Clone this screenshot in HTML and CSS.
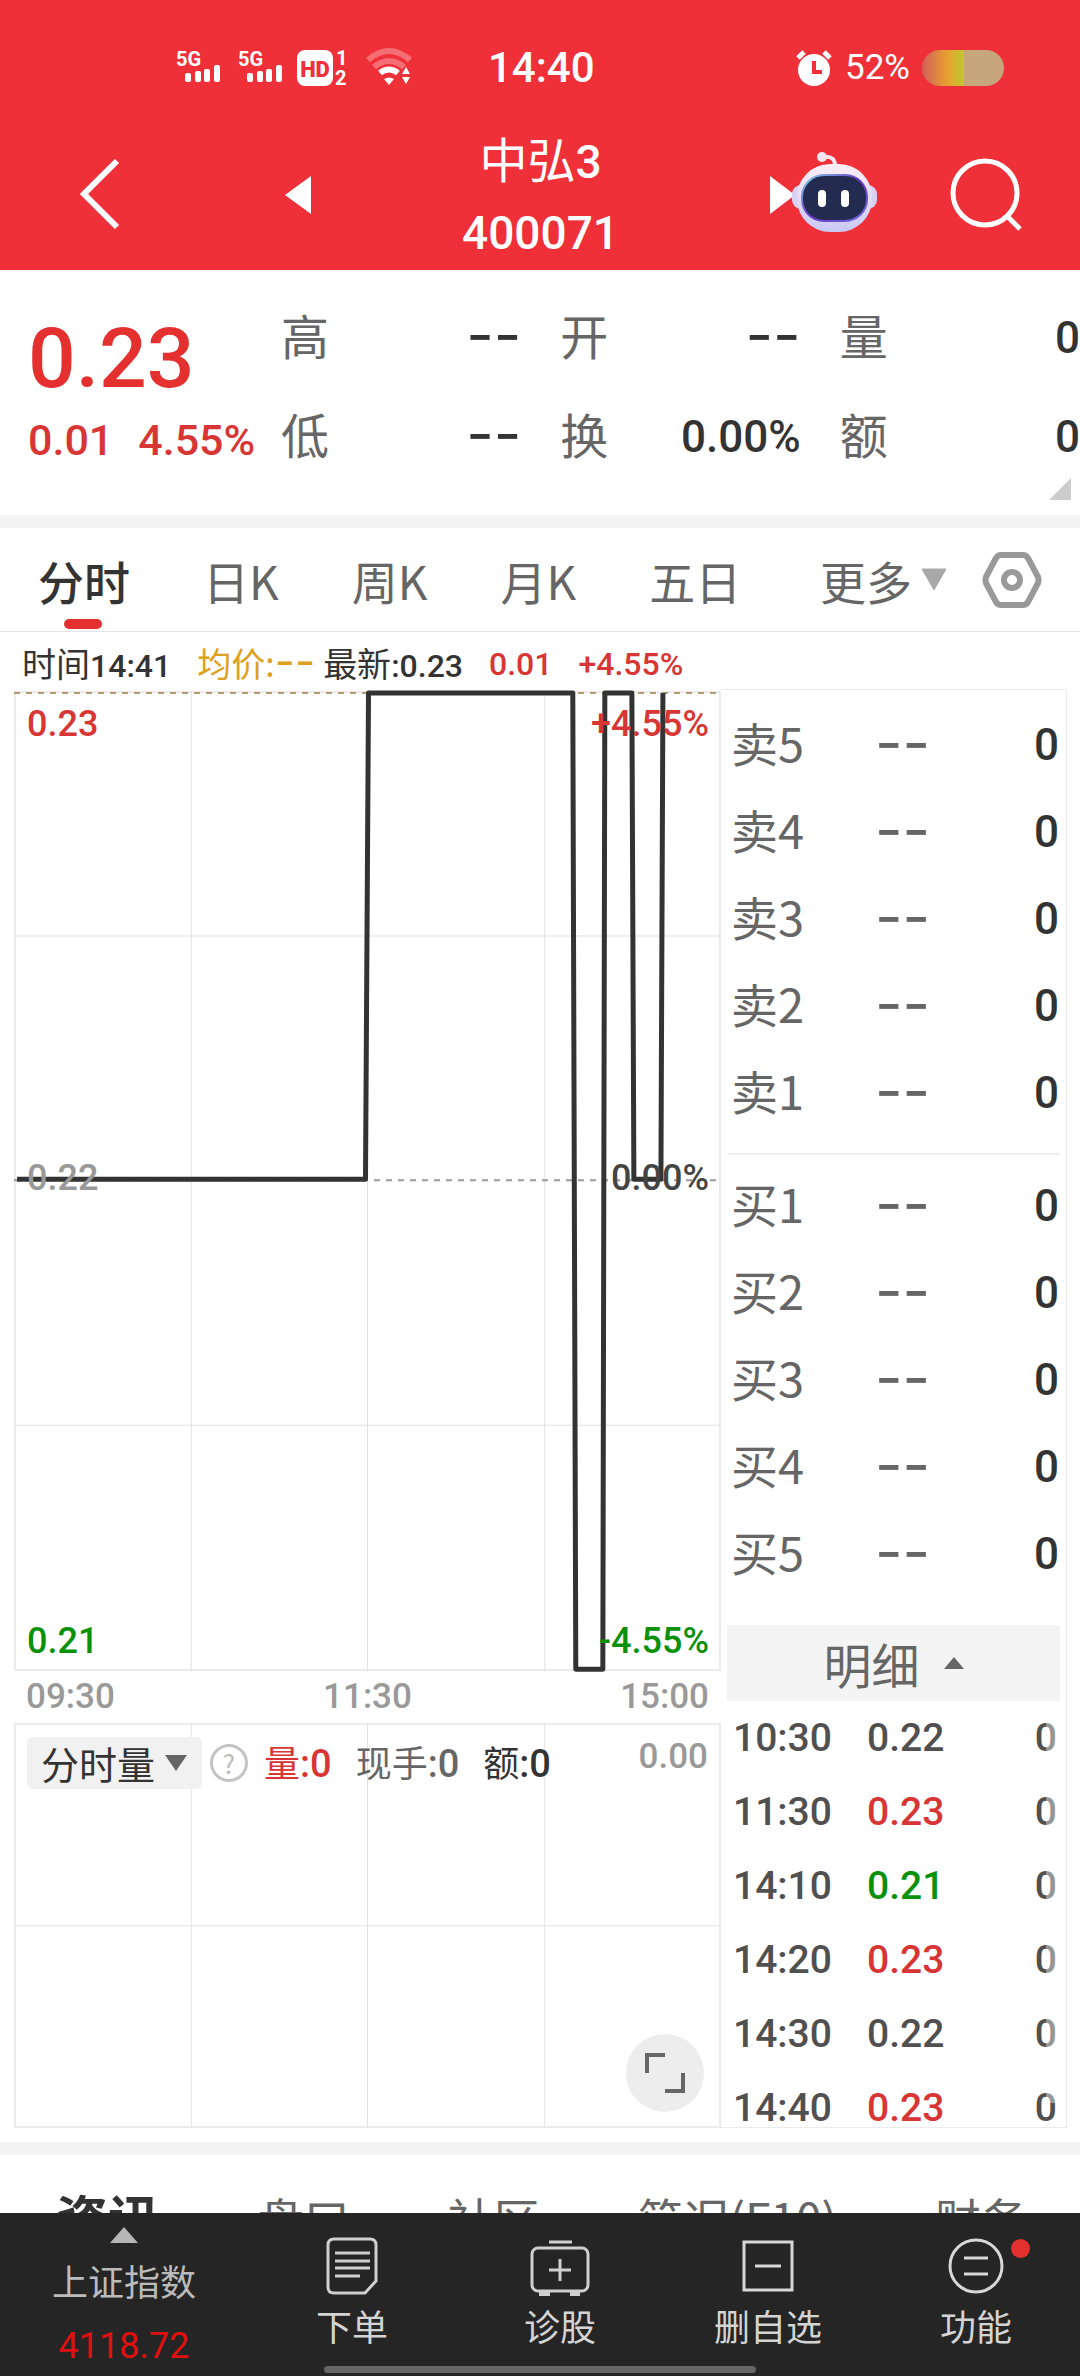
FILE: index.html
```html
<!DOCTYPE html>
<html lang="zh-CN">
<head>
<meta charset="utf-8">
<meta name="viewport" content="width=device-width, initial-scale=1">
<title>中弘3 400071</title>
<link rel="stylesheet" href="styles.css">
</head>
<body>
<header class="top">
  <div class="status">
    <div class="status-left">
      <svg width="172" height="38" viewBox="0 0 172 38" fill="#fff">
        <g id="sig"><text class="sig-text" x="0" y="17">5G</text>
        <rect x="9" y="24" width="6" height="9" rx="2"/><rect x="19" y="22" width="6" height="11" rx="2"/><rect x="28" y="20" width="6" height="13" rx="2"/><rect x="38" y="16" width="6" height="17" rx="2"/></g>
        <use href="#sig" x="62"/>
        <rect x="121" y="1" width="36" height="36" rx="8"/>
        <text class="hd-text" x="139" y="28" text-anchor="middle">HD</text>
        <text class="sig-text" x="160" y="16">1</text><text class="sig-text" x="159" y="36">2</text>
      </svg>
      <svg width="46" height="38" viewBox="0 0 46 38" fill="none">
        <path d="M2 11Q23-7 44 11" stroke="#fff" stroke-opacity=".3" stroke-width="6"/>
        <path d="M8 18Q23 6 38 18" stroke="#fff" stroke-opacity=".3" stroke-width="6"/>
        <path d="M14 24Q23 17 32 24" stroke="#fff" stroke-width="6"/>
        <path d="M18 30Q23 27 28 30L23 36Z" fill="#fff"/>
        <path d="M36 25l4-7 4 7zM36 28h8l-4 7z" fill="#fff"/>
      </svg>
    </div>
    <time class="clock">14:40</time>
    <div class="status-right">
      <svg width="38" height="38" viewBox="0 0 38 38">
        <circle cx="19" cy="21" r="16" fill="#fff"/>
        <path d="M3 9L9 3M29 3L35 9" stroke="#fff" stroke-width="5"/>
        <path d="M19 12V23H27" fill="none" stroke="#f03038" stroke-width="4"/>
      </svg>
      <span class="percent">52%</span>
      <span class="battery"></span>
    </div>
  </div>
  <div class="titlebar">
    <button class="icon-btn" aria-label="返回"><svg width="42" height="72" viewBox="0 0 42 72"><path d="M38 1L5 34L38 67" fill="none" stroke="#fff" stroke-width="6"/></svg></button>
    <button class="icon-btn" aria-label="上一只"><svg width="26" height="40" viewBox="0 0 26 40"><path d="M26 0V38L0 19Z" fill="#fff"/></svg></button>
    <h1 class="stock"><span class="stock-name">中弘<span class="num">3</span></span><span class="num">400071</span></h1>
    <button class="icon-btn" aria-label="下一只"><svg width="108" height="84" viewBox="0 0 108 84">
      <defs>
        <linearGradient id="shell" x1="0" y1="0" x2="0" y2="1"><stop offset="0" stop-color="#fbeef5"/><stop offset=".5" stop-color="#e2dcf5"/><stop offset="1" stop-color="#c9c8f2"/></linearGradient>
        <linearGradient id="rim" x1="0" y1="0" x2="1" y2="1"><stop offset="0" stop-color="#7fd3ea"/><stop offset=".5" stop-color="#6a35c0"/><stop offset="1" stop-color="#6a6ae0"/></linearGradient>
      </defs>
      <path d="M0 22V60L25 41Z" fill="#fff"/>
      <path d="M53 3Q66 1 65 14" fill="none" stroke="#f6e6f2" stroke-width="4"/>
      <circle cx="52" cy="3" r="5" fill="#f6e6f2"/>
      <rect x="22" y="31" width="85" height="24" rx="9" fill="#d9d2f3"/>
      <rect x="27" y="10" width="75" height="68" rx="33" fill="url(#shell)"/>
      <rect x="32" y="21" width="65" height="46" rx="22" fill="#242b50" stroke="url(#rim)" stroke-width="2"/>
      <rect x="48" y="36" width="8" height="17" rx="4" fill="#fff"/><rect x="71" y="36" width="8" height="17" rx="4" fill="#fff"/>
    </svg></button>
    <button class="icon-btn" aria-label="搜索"><svg width="74" height="74" viewBox="0 0 74 74" fill="none" stroke="#fff" stroke-width="5"><circle cx="37" cy="34" r="32"/><path d="M59 57L72 70"/></svg></button>
  </div>
</header>

<main>
  <section class="quote">
    <div class="quote-price">
      <strong class="num last">0.23</strong>
      <div class="num change"><span>0.01</span><span>4.55%</span></div>
    </div>
    <dl class="quote-grid">
      <div><dt>高</dt><dd class="dash">--</dd></div>
      <div><dt>开</dt><dd class="dash">--</dd></div>
      <div><dt>量</dt><dd class="num">0</dd></div>
      <div><dt>低</dt><dd class="dash">--</dd></div>
      <div><dt>换</dt><dd class="num">0.00%</dd></div>
      <div><dt>额</dt><dd class="num">0</dd></div>
    </dl>
    <span class="corner"></span>
  </section>

  <nav class="periods">
    <button class="active">分时</button>
    <button>日K</button>
    <button>周K</button>
    <button>月K</button>
    <button>五日</button>
    <button class="more">更多<svg width="28" height="24" viewBox="0 0 28 24"><path d="M2 1H26L14 22Z" fill="#a8a8a8" stroke="#a8a8a8" stroke-linejoin="round"/></svg></button>
    <button class="settings" aria-label="设置"><svg width="60" height="58" viewBox="0 0 60 58" fill="none" stroke="#999" stroke-width="6" stroke-linejoin="round"><path d="M19 4H41Q44 4 46 7L56 26Q57 29 56 32L46 51Q44 54 41 54H19Q16 54 14 51L4 32Q3 29 4 26L14 7Q16 4 19 4Z"/><circle cx="30" cy="29" r="8"/></svg></button>
  </nav>

  <div class="legend">
    <span>时间<b class="num">14:41</b></span>
    <span class="avg">均价:<b class="dash">--</b></span>
    <span class="newest">最新<b class="num">:0.23</b></span>
    <span class="num up">0.01</span>
    <span class="num up">+4.55%</span>
  </div>

  <section class="board">
    <div class="charts">
      <div class="chart price-chart">
        <svg class="plot" viewBox="0 0 706 980" preserveAspectRatio="none">
          <g class="grid"><path d="M177 0V980M353 0V980M530 0V980M0 245H706M0 734H706"/></g>
          <path class="limit" d="M0 2H706"/>
          <path class="zero" d="M0 489H706"/>
          <path class="line" d="M3 488H351L354 2H558L561 978H588L590 2H617L619 488H646L648 2"/>
        </svg>
        <span class="num tag tl up">0.23</span><span class="num tag tr up">+4.55%</span>
        <span class="num tag ml">0.22</span><span class="num tag mr">0.00%</span>
        <span class="num tag bl down">0.21</span><span class="num tag br down">-4.55%</span>
      </div>
      <div class="num times"><span>09:30</span><span>11:30</span><span>15:00</span></div>
      <div class="chart volume-chart">
        <svg class="plot" viewBox="0 0 706 403" preserveAspectRatio="none">
          <g class="grid"><path d="M177 0V403M353 0V403M530 0V403M0 202H706"/></g>
        </svg>
        <div class="volume-head">
          <button class="indicator">分时量<svg width="22" height="16" viewBox="0 0 22 16"><path d="M0 0H22L11 16Z" fill="#666"/></svg></button>
          <button class="help" aria-label="说明">?</button>
          <span class="up">量<b class="num">:0</b></span>
          <span class="soft">现手<b class="num">:0</b></span>
          <span>额<b class="num">:0</b></span>
          <span class="num max">0.00</span>
        </div>
        <button class="expand" aria-label="全屏"><svg width="42" height="42" viewBox="0 0 42 42" fill="none" stroke="#666" stroke-width="4"><path d="M3 21V3H21M39 21V39H21"/></svg></button>
      </div>
    </div>

    <aside class="depth">
      <table class="orders">
        <tbody>
          <tr><th>卖5</th><td class="dash">--</td><td class="num">0</td></tr>
          <tr><th>卖4</th><td class="dash">--</td><td class="num">0</td></tr>
          <tr><th>卖3</th><td class="dash">--</td><td class="num">0</td></tr>
          <tr><th>卖2</th><td class="dash">--</td><td class="num">0</td></tr>
          <tr><th>卖1</th><td class="dash">--</td><td class="num">0</td></tr>
        </tbody>
      </table>
      <table class="orders buys">
        <tbody>
          <tr><th>买1</th><td class="dash">--</td><td class="num">0</td></tr>
          <tr><th>买2</th><td class="dash">--</td><td class="num">0</td></tr>
          <tr><th>买3</th><td class="dash">--</td><td class="num">0</td></tr>
          <tr><th>买4</th><td class="dash">--</td><td class="num">0</td></tr>
          <tr><th>买5</th><td class="dash">--</td><td class="num">0</td></tr>
        </tbody>
      </table>
      <button class="detail">明细<svg width="20" height="14" viewBox="0 0 20 14"><path d="M0 13L10 1L20 13Z" fill="#666"/></svg></button>
      <div class="trades">
        <table class="num">
          <tbody>
            <tr><td>10:30</td><td>0.22</td><td>0</td></tr>
            <tr><td>11:30</td><td class="up">0.23</td><td>0</td></tr>
            <tr><td>14:10</td><td class="down">0.21</td><td>0</td></tr>
            <tr><td>14:20</td><td class="up">0.23</td><td>0</td></tr>
            <tr><td>14:30</td><td>0.22</td><td>0</td></tr>
            <tr><td>14:40</td><td class="up">0.23</td><td>0</td></tr>
          </tbody>
        </table>
      </div>
    </aside>
  </section>

  <nav class="sections">
    <button class="active">资讯</button>
    <button>盘口</button>
    <button>社区</button>
    <button>简况(F10)</button>
    <button>财务</button>
  </nav>
</main>

<footer class="dock">
  <button class="index">
    <svg width="28" height="16" viewBox="0 0 28 16"><path d="M0 16L14 0L28 16Z" fill="#b5b5b5"/></svg>
    <span>上证指数</span>
    <span class="index-value">4118.72</span>
  </button>
  <button>
    <svg width="60" height="60" viewBox="0 0 60 60" fill="none" stroke="#d0d0d0" stroke-width="3"><path d="M12 3H48Q54 3 54 9V45L43 57H12Q6 57 6 51V9Q6 3 12 3Z"/><path d="M13 17H48M13 25H48M13 32H48M13 40H38"/></svg>
    <span>下单</span>
  </button>
  <button>
    <svg width="60" height="60" viewBox="0 0 60 60" fill="none" stroke="#d0d0d0" stroke-width="3"><rect x="2" y="12" width="56" height="43" rx="6"/><path d="M19 6H42M30 23V45M19 34H41"/><path d="M9 58H20M40 58H50" stroke-width="4"/></svg>
    <span>诊股</span>
  </button>
  <button>
    <svg width="60" height="60" viewBox="0 0 60 60" fill="none" stroke="#d8d8d8" stroke-width="3"><rect x="6" y="6" width="48" height="48"/><path d="M17 30H43"/></svg>
    <span>删自选</span>
  </button>
  <button>
    <svg width="60" height="60" viewBox="0 0 60 60" fill="none" stroke="#d8d8d8" stroke-width="3"><circle cx="30" cy="30" r="26"/><path d="M18 22H42M18 38H42"/></svg>
    <span>功能</span>
    <i class="dot"></i>
  </button>
  <span class="home"></span>
</footer>
</body>
</html>
```
FILE: styles.css
```css
* { box-sizing: border-box; margin: 0; padding: 0; }

:root {
  --red: #d83535;
  --green: #0a910a;
  --ink: #333;
  --soft: #666;
  --faint: #999;
  --rule: #ebebeb;
  --band: #f4f4f4;
  --cjk: "Noto Sans CJK SC", sans-serif;
  --digits: Roboto, sans-serif;
}

body {
  font-family: var(--cjk);
  color: var(--ink);
  background: #fff;
  overflow-x: hidden;
}

button { border: 0; background: none; font: inherit; color: inherit; white-space: nowrap; cursor: pointer; }
svg { display: block; overflow: visible; }
b, strong, th { font-weight: 400; }

.num { font-family: var(--digits); font-weight: 500; }
.dash { font-family: Inter, sans-serif; }
.up { color: var(--red); }
.down { color: var(--green); }
.soft { color: var(--soft); }

/* Status bar and title */
.top { background: #f03038; color: #fff; }
.status {
  height: 122px;
  padding: 14px 76px 0 176px;
  display: grid;
  grid-template-columns: 312px 1fr auto;
  align-items: center;
}
.status-left { display: flex; gap: 18px; }
.status-right { display: flex; align-items: center; justify-content: flex-end; gap: 12px; }
.sig-text { font: 700 20px Roboto, sans-serif; }
.hd-text { font: 900 22px Roboto, sans-serif; fill: #f03038; }
.clock { font: 500 42px/48px Roboto, sans-serif; }
.percent { font: 400 35px/40px Roboto, sans-serif; }
.battery {
  width: 82px; height: 36px; border-radius: 18px;
  background: linear-gradient(90deg, #d0605a, #e8a030 60%, #c0c830) 0 0 / 42px 100% no-repeat #c8a67c;
}
.titlebar {
  height: 148px;
  padding: 0 58px 8px 79px;
  display: grid;
  grid-template-columns: 206px 26px 1fr 108px 144px;
  align-items: center;
}
.icon-btn:last-child { justify-self: end; }
.stock { text-align: center; font-weight: 400; font-size: 46px; }
.stock span { display: block; line-height: 71px; }
.stock .stock-name { font-size: 48px; }
.stock-name .num { display: inline; font-size: 46px; }

/* Quote summary */
.quote {
  position: relative;
  display: grid;
  grid-template-columns: 253px 1fr;
  padding: 15px 0 32px 28px;
  border-bottom: 13px solid var(--band);
}
.quote-price { padding-top: 18px; color: #e53030; }
.last { display: block; font-size: 84px; line-height: 112px; }
.change { display: flex; gap: 25px; font-size: 43px; line-height: 50px; color: var(--red); }
.quote-grid { display: grid; grid-template-columns: repeat(3, 1fr); column-gap: 39px; }
.quote-grid div { display: flex; justify-content: space-between; font-size: 48px; line-height: 99px; }
.quote-grid dt { color: var(--soft); }
.quote-grid .dash { font-size: 60px; }
.quote-grid .num { padding-top: 8px; font-size: 44px; line-height: 91px; }
.corner {
  position: absolute; right: 9px; bottom: 15px;
  border: 11px solid transparent; border-right-color: #ccc; border-bottom-color: #ccc;
}

/* Period tabs */
.periods {
  display: flex;
  align-items: center;
  gap: 73px;
  height: 104px;
  padding: 0 38px;
  border-bottom: 1px solid #e4e4e4;
  font-size: 46px;
  color: var(--soft);
}
.periods .active { position: relative; color: var(--ink); font-weight: 500; }
.periods .active::after {
  content: ""; position: absolute; left: 26px; bottom: -16px;
  width: 38px; height: 10px; border-radius: 5px; background: #e53030;
}
.more { display: flex; align-items: center; gap: 8px; margin-left: auto; }
.settings { margin-left: -39px; }

/* Cursor readout */
.legend { display: flex; height: 57px; padding-left: 22px; font-size: 34px; line-height: 62px; }
.avg { color: #dda020; margin-left: 26px; }
.avg .dash { font-size: 44px; line-height: 34px; }
.newest { margin-left: 8px; }
.legend .num { font-size: 32px; }
.legend .up { margin-left: 26px; line-height: 64px; }

/* Charts and order book */
.board {
  display: grid;
  grid-template-columns: 707fr 346fr;
  margin: 0 13px 0 14px;
  padding-bottom: 14px;
}
.charts { display: flex; flex-direction: column; padding-top: 2px; }
.chart { position: relative; border: 2px solid var(--rule); }
.price-chart { flex: 982; }
.volume-chart { flex: 403; }
.plot { position: absolute; inset: -2px; width: calc(100% + 4px); height: calc(100% + 4px); fill: none; }
.plot path { vector-effect: non-scaling-stroke; }
.grid { stroke: #e2e2e2; stroke-width: 1; }
.limit { stroke: #b39c74; stroke-width: 2; stroke-dasharray: 6 6; }
.zero { stroke: #999; stroke-width: 2; stroke-dasharray: 6 6; }
.line { stroke: #333; stroke-width: 5; stroke-linejoin: round; }
.tag { position: absolute; font-size: 36px; line-height: 38px; }
.tl, .ml, .bl { left: 11px; }
.tr, .mr, .br { right: 10px; }
.tl, .tr { top: 12px; }
.ml, .mr { top: calc(50% - 22px); }
.bl, .br { bottom: 9px; }
.ml { color: var(--faint); }
.mr { color: #444; }
.times { display: flex; justify-content: space-between; padding: 0 12px; font-size: 35px; line-height: 52px; color: var(--faint); }
.volume-head { position: relative; display: flex; align-items: center; padding: 10px 11px 0 11px; font-size: 36px; line-height: 52px; }
.indicator { display: flex; align-items: center; gap: 10px; width: 175px; padding-left: 14px; border-radius: 6px; background: #f1f1f1; font-size: 38px; }
.help { width: 38px; height: 38px; margin: 0 16px 0 8px; border: 3px solid #c4c4c4; border-radius: 50%; font-size: 26px; line-height: 32px; color: #bbb; }
.volume-head .num { font-size: 38px; }
.volume-head .soft { margin: 0 24px; }
.volume-head .max { margin-left: auto; font-size: 35px; line-height: 44px; align-self: flex-start; color: var(--faint); }
.expand {
  position: absolute; right: 15px; bottom: 14px;
  width: 78px; height: 78px; border-radius: 50%;
  display: grid; place-items: center; background: #ededed;
}

.depth { border: 1px solid var(--rule); border-left: 0; padding: 8px 6px 6px 6px; }
table { width: 100%; border-collapse: collapse; table-layout: fixed; }
.orders { font-size: 47px; }
.orders tr { height: 87px; }
.orders th { width: 123px; padding-left: 4px; text-align: left; color: var(--soft); line-height: 60px; }
.orders .dash { font-size: 60px; line-height: 60px; text-align: center; color: var(--soft); }
.orders .num { font-size: 44px; text-align: right; padding: 6px 1px 0 0; }
.buys { border-collapse: separate; border-spacing: 0; border-top: 2px solid #eee; margin-top: 20px; padding-top: 4px; }
.detail {
  display: flex; align-items: center; justify-content: center; gap: 24px;
  width: 100%; height: 76px; margin-top: 31px; background: var(--band);
  font-size: 48px; color: var(--soft);
}
.trades { position: relative; height: 420px; overflow: hidden; }
.trades::after {
  content: ""; position: absolute; top: 0; right: 0; width: 14px; height: 402px;
  background: rgba(255, 255, 255, 0.4);
}
.trades tr { height: 74px; }
.trades td { font-size: 39px; line-height: 74px; color: #505050; }
.trades td:first-child { width: 140px; padding-left: 6px; }
.trades td:last-child { text-align: right; padding-right: 3px; }
.trades td.up { color: var(--red); }
.trades td.down { color: var(--green); }

/* Lower tabs */
.sections {
  display: flex;
  justify-content: space-between;
  padding: 26px 53px 60px 56px;
  border-top: 13px solid var(--band);
  font-size: 46px;
  line-height: 72px;
  color: var(--soft);
}
.sections .active { font-size: 52px; font-weight: 700; color: var(--ink); }

/* Bottom dock */
.dock {
  position: fixed; left: 0; right: 0; bottom: 0;
  height: 163px;
  display: grid;
  grid-template-columns: 248px repeat(4, 1fr);
  background: #252525;
  color: #d4d4d4;
  font-size: 36px;
  line-height: 44px;
}
.dock button { position: relative; display: flex; flex-direction: column; align-items: center; padding-top: 23px; gap: 7px; }
.dock .index { padding: 14px 0 0; gap: 15px; color: #bbb; }
.dock .index-value { font: 400 36px/58px Roboto, sans-serif; color: #e01010; }
.dot { position: absolute; left: calc(50% + 35px); top: 26px; width: 19px; height: 19px; border-radius: 50%; background: #e53030; }
.home { position: absolute; left: 30%; right: 30%; bottom: 3px; height: 7px; border-radius: 4px; background: #666; }
```
